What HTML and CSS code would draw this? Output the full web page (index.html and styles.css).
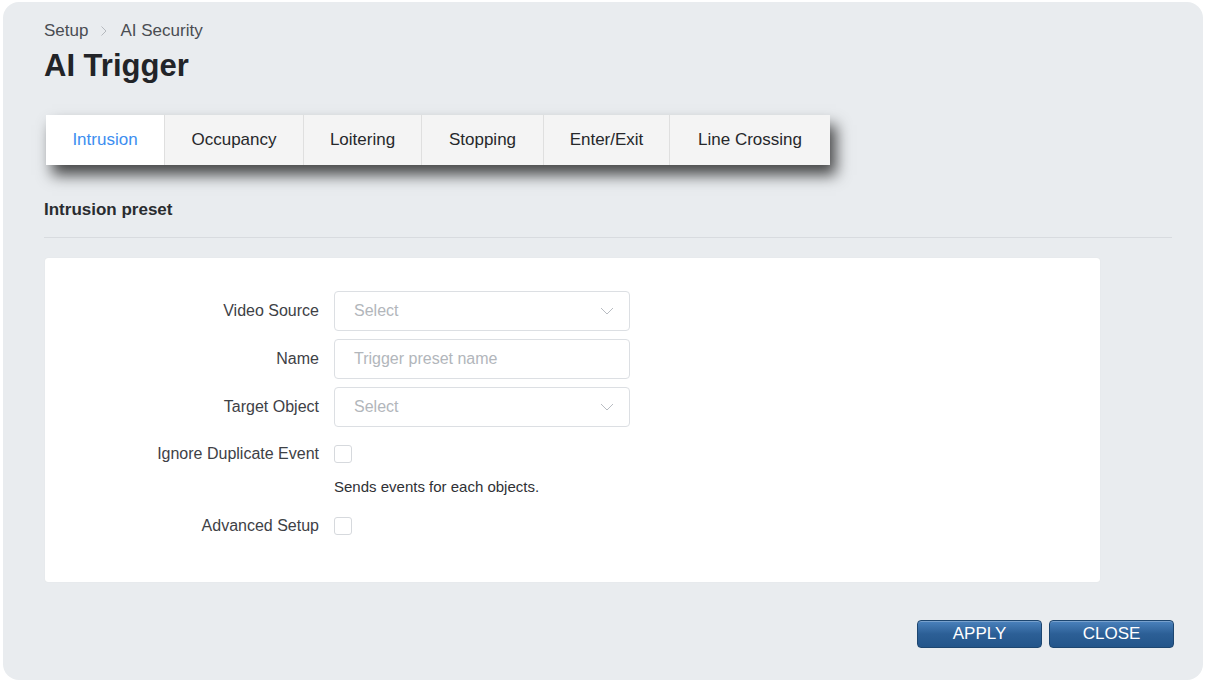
FILE: index.html
```html
<!DOCTYPE html>
<html lang="en">
<head>
    <meta charset="UTF-8">
    <meta name="viewport" content="width=device-width, initial-scale=1.0">
    <title>AI Trigger</title>
    <link rel="stylesheet" href="styles.css">
</head>
<body>
    <div class="panel">
        <div class="crumbs">
            <span>Setup</span>
            <svg class="crumb-sep" width="8" height="12" viewBox="0 0 8 12"><path d="M1.5 1.5 L6 6 L1.5 10.5" fill="none" stroke="#b5b9be" stroke-width="1"/></svg>
            <span>AI Security</span>
        </div>
        <h1 class="title">AI Trigger</h1>

        <div class="tabs">
            <div class="tab active">Intrusion</div>
            <div class="tab">Occupancy</div>
            <div class="tab">Loitering</div>
            <div class="tab">Stopping</div>
            <div class="tab">Enter/Exit</div>
            <div class="tab">Line Crossing</div>
        </div>

        <div class="section-title">Intrusion preset</div>

        <div class="card">
            <div class="row">
                <label class="lbl">Video Source</label>
                <div class="field select">
                    <span class="ph">Select</span>
                    <svg width="14" height="8" viewBox="0 0 14 8"><path d="M1 1 L7 7 L13 1" fill="none" stroke="#b8bcc2" stroke-width="1"/></svg>
                </div>
            </div>
            <div class="row">
                <label class="lbl">Name</label>
                <div class="field"><span class="ph">Trigger preset name</span></div>
            </div>
            <div class="row">
                <label class="lbl">Target Object</label>
                <div class="field select">
                    <span class="ph">Select</span>
                    <svg width="14" height="8" viewBox="0 0 14 8"><path d="M1 1 L7 7 L13 1" fill="none" stroke="#b8bcc2" stroke-width="1"/></svg>
                </div>
            </div>
            <div class="row check-row">
                <label class="lbl">Ignore Duplicate Event</label>
                <span class="box"></span>
            </div>
            <div class="help">Sends events for each objects.</div>
            <div class="row check-row">
                <label class="lbl">Advanced Setup</label>
                <span class="box"></span>
            </div>
        </div>

        <div class="actions">
            <button class="btn">APPLY</button>
            <button class="btn">CLOSE</button>
        </div>
    </div>
</body>
</html>
```

FILE: styles.css
```css
*{
    margin: 0px;
    padding: 0px;
    box-sizing: border-box;
    font-family: 'Liberation Sans', Arial, sans-serif;
}
body{
    background: #ffffff;
    width: 1208px;
    height: 684px;
    padding: 2px 5px 4px 3px;
}
.panel{
    background: #e9ecef;
    border-radius: 16px;
    height: 678px;
    padding: 20px 31px 0 41px;
}
.crumbs{
    display: flex;
    align-items: center;
    gap: 10px;
    font-size: 17px;
    color: #4a4d52;
    height: 18px;
}
.crumb-sep{
    margin: 0 2px 0 2px;
}
.title{
    font-size: 31px;
    font-weight: bold;
    color: #222428;
    margin-top: 8px;
    line-height: 36px;
}
.tabs{
    display: flex;
    width: 784px;
    height: 50px;
    margin-top: 31px;
    margin-left: 2px;
    background: #f4f4f4;
    box-shadow: 6px 10px 14px rgba(0,0,0,0.7);
}
.tab{
    font-size: 17px;
    color: #26282b;
    display: flex;
    align-items: center;
    justify-content: center;
    border-left: 1px solid #dfdfdf;
}
.tab:nth-child(1){ width: 118px; border-left: none; }
.tab:nth-child(2){ width: 139px; }
.tab:nth-child(3){ width: 118px; }
.tab:nth-child(4){ width: 122px; }
.tab:nth-child(5){ width: 126px; }
.tab:nth-child(6){ width: 161px; }
.tab.active{
    background: #ffffff;
    color: #3d8ef0;
}
.section-title{
    font-size: 17px;
    font-weight: bold;
    color: #2a2c30;
    margin-top: 35px;
    padding-bottom: 17px;
    border-bottom: 1px solid #d8dbdf;
}
.card{
    background: #ffffff;
    border-radius: 3px;
    margin-top: 20px;
    margin-left: 1px;
    width: 1055px;
    height: 324px;
    padding: 33px 0 0 0;
    box-shadow: 0 0 1px rgba(0,0,0,0.1);
}
.row{
    display: flex;
    align-items: center;
    margin-bottom: 8px;
}
.lbl{
    width: 274px;
    text-align: right;
    font-size: 16px;
    color: #3e4146;
}
.field{
    margin-left: 15px;
    width: 296px;
    height: 40px;
    border: 1px solid #dcdfe3;
    border-radius: 4px;
    display: flex;
    align-items: center;
    justify-content: space-between;
    padding: 0 15px 0 19px;
}
.ph{
    font-size: 16px;
    color: #b2b6bb;
}
.check-row{
    margin-top: 17px;
    height: 20px;
}
.box{
    margin-left: 15px;
    width: 18px;
    height: 18px;
    border: 1px solid #d6d9dd;
    border-radius: 3px;
    background: #fff;
}
.help{
    margin-left: 289px;
    font-size: 15px;
    color: #2f3135;
    margin-top: 14px;
    margin-bottom: 21px;
}
.actions{
    display: flex;
    justify-content: flex-end;
    gap: 7px;
    margin-top: 38px;
    margin-right: -2px;
}
.btn{
    width: 125px;
    height: 28px;
    border-radius: 4px;
    border: 1px solid #1d4670;
    background: linear-gradient(#4b82bd, #2c5f96 50%, #23558a);
    color: #ffffff;
    font-size: 17px;
    font-family: 'Liberation Sans', Arial, sans-serif;
    box-shadow: inset 0 1px 0 rgba(255,255,255,0.25);
}
```
